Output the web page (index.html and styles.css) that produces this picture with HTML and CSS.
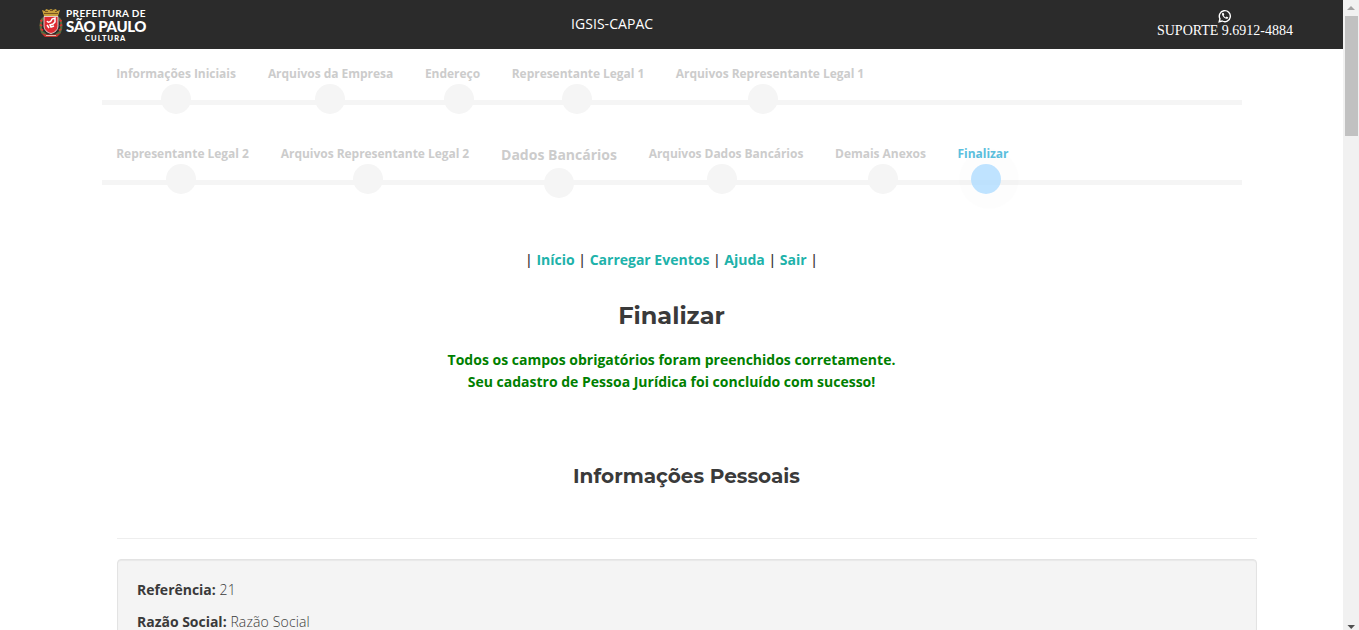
FILE: index.html
```html
<!DOCTYPE html>
<html lang="pt-BR">
<head>
<meta charset="utf-8">
<title>IGSIS-CAPAC</title>
<link rel="stylesheet" href="styles.css">
</head>
<body>
<div class="page">
  <header class="topbar">
    <div class="brand">
      <svg class="crest" width="24" height="30" viewBox="0 0 24 30">
        <path d="M3 2l3 1 1-2 3 1 2-1 2 1 3-1 1 2 3-1-2 6H5z" fill="#c9a13b"/>
        <path d="M5 5.500h14M6 3.500h3m2-1h3m2 1h2" stroke="#7a5522" stroke-width="1"/>
        <path d="M4 10c-3 4-3 10-1 14l4 3M20 10c3 4 3 10 1 14l-4 3" fill="none" stroke="#56703f" stroke-width="2.200"/>
        <path d="M1.500 12l1.500 1.500m-2 3l2 1.500m-1 3l2 1.500m18.500-10.500l-1.500 1.500m2 3l-2 1.500m1 3l-2 1.500" stroke="#d93631" stroke-width="1.800"/>
        <path d="M5 8.500h14v9c0 4.500-3 7-7 8-4-1-7-3.500-7-8z" fill="#de2b33" stroke="#f3dcd8" stroke-width=".9"/>
        <path d="M8 13c1 2 3 1 4 0l1-2 3-1v4l-2 2-3 1 1 2 3-1m-5 2l-2-3" fill="none" stroke="#fff" stroke-width="1.500"/>
        <path d="M2 25l5 1.500h10l5-1.500-4 4H6z" fill="#c7332e"/>
        <path d="M7 27.500h10" stroke="#efe0ce" stroke-width=".8"/>
      </svg>
      <div class="brand-text">
        <span class="brand-top">PREFEITURA DE</span>
        <span class="brand-name">SÃO PAULO</span>
        <span class="brand-area">CULTURA</span>
      </div>
    </div>
    <div class="app-name">IGSIS-CAPAC</div>
    <div class="support">
      <svg width="14" height="14" viewBox="0 0 14 14">
        <path d="M1.200 12.800l.8-3A5.500 5.500 0 1 1 4.200 12z" fill="none" stroke="#fff" stroke-width="1.400"/>
        <path d="M4.700 3.700c-.8.5-.9 1.500-.3 2.700.8 1.600 2 2.800 3.800 3.300 1 .3 1.900-.2 2.100-1.200L8.600 7.600l-.8.8C6.900 8 6.200 7.300 5.700 6.400l.6-.8-.7-1.700z" fill="#fff"/>
      </svg>
      <span>SUPORTE 9.6912-4884</span>
    </div>
  </header>
  <ul class="steps">
    <li class="step s1"><span>Informações Iniciais</span></li>
    <li class="step s2"><span>Arquivos da Empresa</span></li>
    <li class="step s3"><span>Endereço</span></li>
    <li class="step s4"><span>Representante Legal 1</span></li>
    <li class="step s5"><span>Arquivos Representante Legal 1</span></li>
  </ul>
  <ul class="steps">
    <li class="step s6"><span>Representante Legal 2</span></li>
    <li class="step s7"><span>Arquivos Representante Legal 2</span></li>
    <li class="step s8 large"><span>Dados Bancários</span></li>
    <li class="step s9"><span>Arquivos Dados Bancários</span></li>
    <li class="step s10"><span>Demais Anexos</span></li>
    <li class="step s11 active"><span>Finalizar</span></li>
  </ul>
  <main class="content">
    <nav class="menu">| <a>Início</a> | <a>Carregar Eventos</a> | <a>Ajuda</a> | <a>Sair</a> |</nav>
    <h1 class="title">Finalizar</h1>
    <p class="success">Todos os campos obrigatórios foram preenchidos corretamente.<br>Seu cadastro de Pessoa Jurídica foi concluído com sucesso!</p>
    <section class="details">
      <h2 class="subtitle">Informações Pessoais</h2>
      <div class="well">
        <p><b>Referência:</b> 21</p>
        <p><b>Razão Social:</b> Razão Social</p>
      </div>
    </section>
  </main>
</div>
<div class="scrollbar">
  <svg width="16" height="16"><path d="M4 10h8l-4-4z" fill="#a3a3a3"/></svg>
  <div class="thumb"></div>
  <svg class="down" width="16" height="16"><path d="M4.500 11h7.500l-3.750 4z" fill="#505050"/></svg>
</div>
</body>
</html>
```
FILE: styles.css
```css
* { box-sizing: border-box; }
body { margin: 0; height: 630px; overflow: hidden; display: flex; background: #fff; color: #3a3a3a; font: 14px/22px "Open Sans", sans-serif; }
.page { width: 1343px; height: 630px; overflow: hidden; }
.topbar { height: 49px; background: #2b2b2b; color: #fff; display: grid; grid-template-columns: 400px 1fr 400px; }
.brand { display: flex; padding: 8px 0 0 39px; gap: 3px; }
.brand-text { width: 80px; display: flex; flex-direction: column; white-space: nowrap; font-family: Lato, sans-serif; font-weight: 700; }
.brand-top { font-size: 10px; line-height: 11px; letter-spacing: .38px; }
.brand-name { font-size: 15px; line-height: 14px; font-weight: 900; letter-spacing: -.4px; }
.brand-area { font-size: 7.5px; line-height: 9px; letter-spacing: 1.05px; padding: 1px 0 0 19px; font-weight: 900; }
.app-name { padding: 13px 0 0 171px; white-space: nowrap; letter-spacing: .05px; }
.support { display: flex; flex-direction: column; align-items: center; gap: 1px; padding-top: 9px; width: 136px; margin-left: 214px; white-space: nowrap; font: 14px/14px "Liberation Serif", serif; }
.steps { width: 1140px; height: 80px; margin: 0 0 0 102px; padding: 14px 14px 0; list-style: none; display: flex; gap: 32px; background: linear-gradient(#f5f5f5, #f5f5f5) 0 51px / 1140px 5px no-repeat; }
.step { color: #ccc; font-size: 12px; line-height: 21px; font-weight: 700; letter-spacing: -.04px; white-space: nowrap; display: flex; flex-direction: column; align-items: center; }
.step::after { content: ""; width: 30px; height: 30px; border-radius: 50%; background: #f5f5f5; flex: none; }
.s1 { width: 120px; } .s2 { width: 125px; } .s3 { width: 55px; } .s4 { width: 132px; } .s5 { width: 188px; }
.s6 { width: 133px; } .s7 { width: 188px; } .s8 { width: 116px; } .s9 { width: 154px; } .s10 { width: 91px; } .s11 { width: 50px; }
.s2::after, .s4::after { margin-left: -2px; }
.s3::after { margin-left: 12px; }
.s5::after, .s7::after { margin-left: -14px; }
.s6::after { margin-left: -4px; }
.s9::after { margin-left: -9px; }
.s10::after { margin-left: 4px; }
.large { font-size: 14px; line-height: 24px; letter-spacing: 0; }
.large::after { margin-top: 1px; }
.active { color: #5bc0de; }
.active::after { background: rgba(169, 218, 255, .75); box-shadow: 3px 0 0 15px rgba(0, 0, 0, .008); margin-left: 6px; }
.content { display: flex; flex-direction: column; align-items: center; padding-top: 40px; }
.menu { font-weight: 600; }
.menu a { color: #20b2aa; font-weight: 700; }
.title, .subtitle { margin: 0; font-family: Montserrat, Inter, sans-serif; font-weight: 700; }
.title { font-size: 24px; line-height: 30px; margin-top: 30px; }
.subtitle { font-size: 20px; line-height: 26px; text-align: center; border-bottom: 1px solid #eee; height: 76px; padding-right: 1px; }
.success { color: #008000; font-weight: 700; text-align: center; margin: 18px 0 0; }
.details { width: 1140px; margin: 70px 0 0 31px; }
.well { height: 200px; margin-top: 20px; padding: 19px; background: #f4f4f4; border: 1px solid #e3e3e3; border-radius: 4px; box-shadow: inset 0 1px 1px rgba(0, 0, 0, .05); font-weight: 300; letter-spacing: .15px; }
.well p { margin: 0 0 10px; }
.well b { font-weight: 700; letter-spacing: -.02px; }
.scrollbar { width: 16px; height: 630px; background: #f1f1f1; display: flex; flex-direction: column; }
.thumb { width: 13px; height: 120px; margin-left: 2px; background: #c1c1c1; }
.down { margin-top: auto; }
```
